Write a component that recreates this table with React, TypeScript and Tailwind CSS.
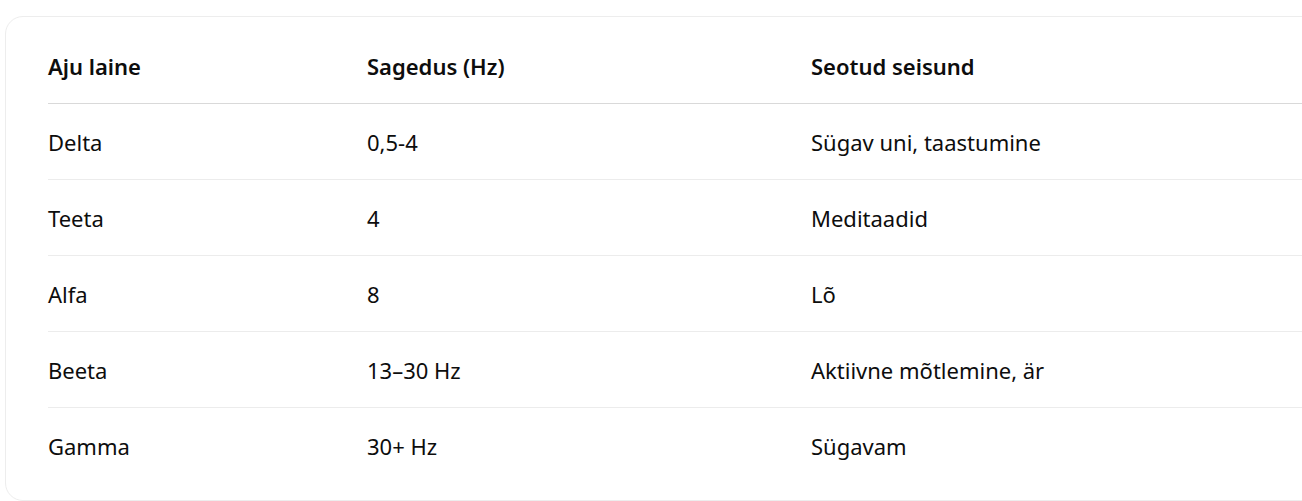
const rows = [
  ["Delta", "0,5-4", "Sügav uni, taastumine"],
  ["Teeta", "4", "Meditaadid"],
  ["Alfa", "8", "Lõ"],
  ["Beeta", "13–30 Hz", "Aktiivne mõtlemine, är"],
  ["Gamma", "30+ Hz", "Sügavam"],
];

export default function App() {
  return (
    <div className="h-[501px] w-[1302px] overflow-hidden bg-white pl-[5px] pt-4 text-[#0d0d0d] font-['Noto_Sans',sans-serif]">
      <div className="h-[485px] w-[1340px] rounded-[18px] border border-[#ededed] pl-[42px] pt-[14px]">
        <table className="w-[1400px] table-fixed border-collapse text-left text-[22px]">
          <colgroup>
            <col className="w-[319px]" />
            <col className="w-[444px]" />
            <col />
          </colgroup>
          <thead>
            <tr className="h-[72px] border-b border-[#d9d9d9]">
              <th className="font-semibold">Aju laine</th>
              <th className="font-semibold">Sagedus (Hz)</th>
              <th className="font-semibold">Seotud seisund</th>
            </tr>
          </thead>
          <tbody>
            {rows.map((r, i) => (
              <tr key={i} className={"h-[76px] " + (i < rows.length - 1 ? "border-b border-[#ececec]" : "")}>
                <td className="pt-[3px]">{r[0]}</td>
                <td className="pt-[3px]">{r[1]}</td>
                <td className="pt-[3px]">{r[2]}</td>
              </tr>
            ))}
          </tbody>
        </table>
      </div>
    </div>
  );
}
